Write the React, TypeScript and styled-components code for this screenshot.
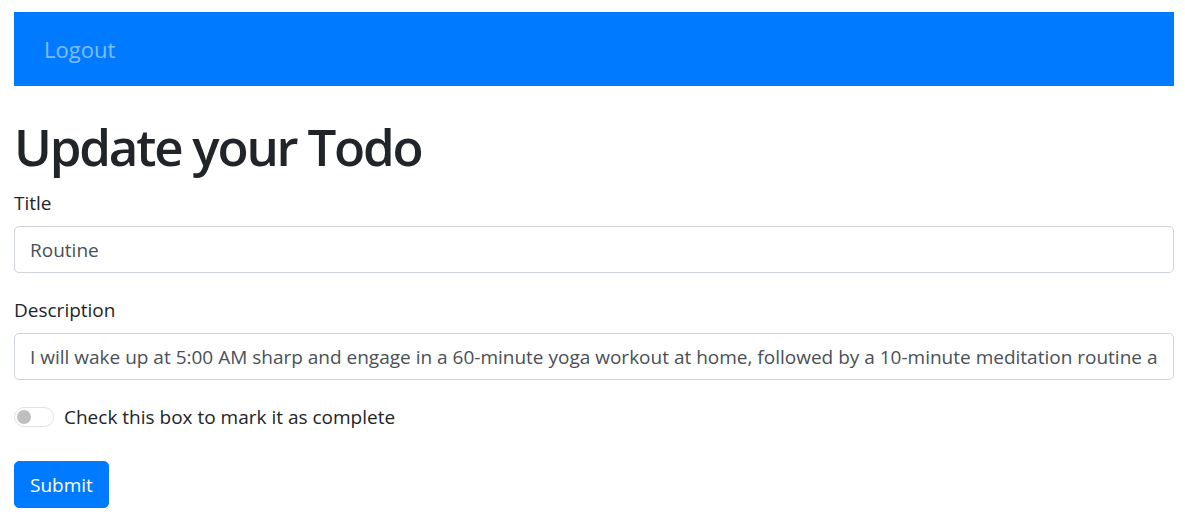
import React from "react";
import styled, { createGlobalStyle } from "styled-components";

const Global = createGlobalStyle`
  html, body { margin: 0; padding: 0; background: #fff; }
  body {
    font-family: "Open Sans", "Noto Sans", sans-serif;
    color: #212529;
    font-size: 19px;
  }
  * { box-sizing: border-box; }
`;

const Page = styled.div`
  padding: 12px 11px 0 14px;
`;

const Navbar = styled.nav`
  height: 74px;
  background: #007bff;
  display: flex;
  align-items: center;
  padding: 0 20px;
`;

const NavLink = styled.a`
  color: rgba(255, 255, 255, 0.5);
  padding: 0 10px;
  font-size: 22px;
  line-height: 30px;
  text-decoration: none;
  cursor: pointer;
`;

const Heading = styled.h1`
  margin: 30px 0 11px;
  font-size: 51px;
  font-weight: 600;
  letter-spacing: -2.2px;
  line-height: 1.2;
  color: #212529;
`;

const Form = styled.form`
  display: flex;
  flex-direction: column;
`;

const Group = styled.div<{ $gap?: number }>`
  display: flex;
  flex-direction: column;
  margin-bottom: ${(p) => p.$gap ?? 22}px;
`;

const Label = styled.label`
  font-size: 19px;
  line-height: 30px;
  margin-bottom: 8px;
`;

const Input = styled.input`
  width: 100%;
  height: 47px;
  padding: 0 15px;
  font-family: inherit;
  font-size: 19px;
  color: #495057;
  border: 1px solid #ced4da;
  border-radius: 5px;
  background: #fff;
  outline: none;
`;

const CheckRow = styled.label`
  display: flex;
  align-items: center;
  gap: 10px;
  font-size: 19px;
  line-height: 30px;
  margin: 22px 0 0;
`;

const Switch = styled.span`
  width: 40px;
  height: 20px;
  border: 1px solid #dee2e6;
  border-radius: 10px;
  display: flex;
  align-items: center;
  padding-left: 2px;
  &::before {
    content: "";
    width: 14px;
    height: 14px;
    border-radius: 50%;
    background: #bfbfbf;
  }
`;

const Button = styled.button`
  align-self: flex-start;
  margin-top: 29px;
  height: 47px;
  padding: 0 15px;
  background: #007bff;
  color: #fff;
  border: 1px solid #007bff;
  border-radius: 5px;
  font-family: inherit;
  font-size: 19px;
  cursor: pointer;
`;

export default function App() {
  return (
    <Page>
      <Global />
      <Navbar>
        <NavLink>Logout</NavLink>
      </Navbar>
      <Heading>Update your Todo</Heading>
      <Form onSubmit={(e) => e.preventDefault()}>
        <Group>
          <Label>Title</Label>
          <Input readOnly value="Routine" />
        </Group>
        <Group $gap={0}>
          <Label>Description</Label>
          <Input
            readOnly
            value="I will wake up at 5:00 AM sharp and engage in a 60-minute yoga workout at home, followed by a 10-minute meditation routine and a healthy breakfast."
          />
        </Group>
        <CheckRow>
          <Switch />
          Check this box to mark it as complete
        </CheckRow>
        <Button type="submit">Submit</Button>
      </Form>
    </Page>
  );
}
